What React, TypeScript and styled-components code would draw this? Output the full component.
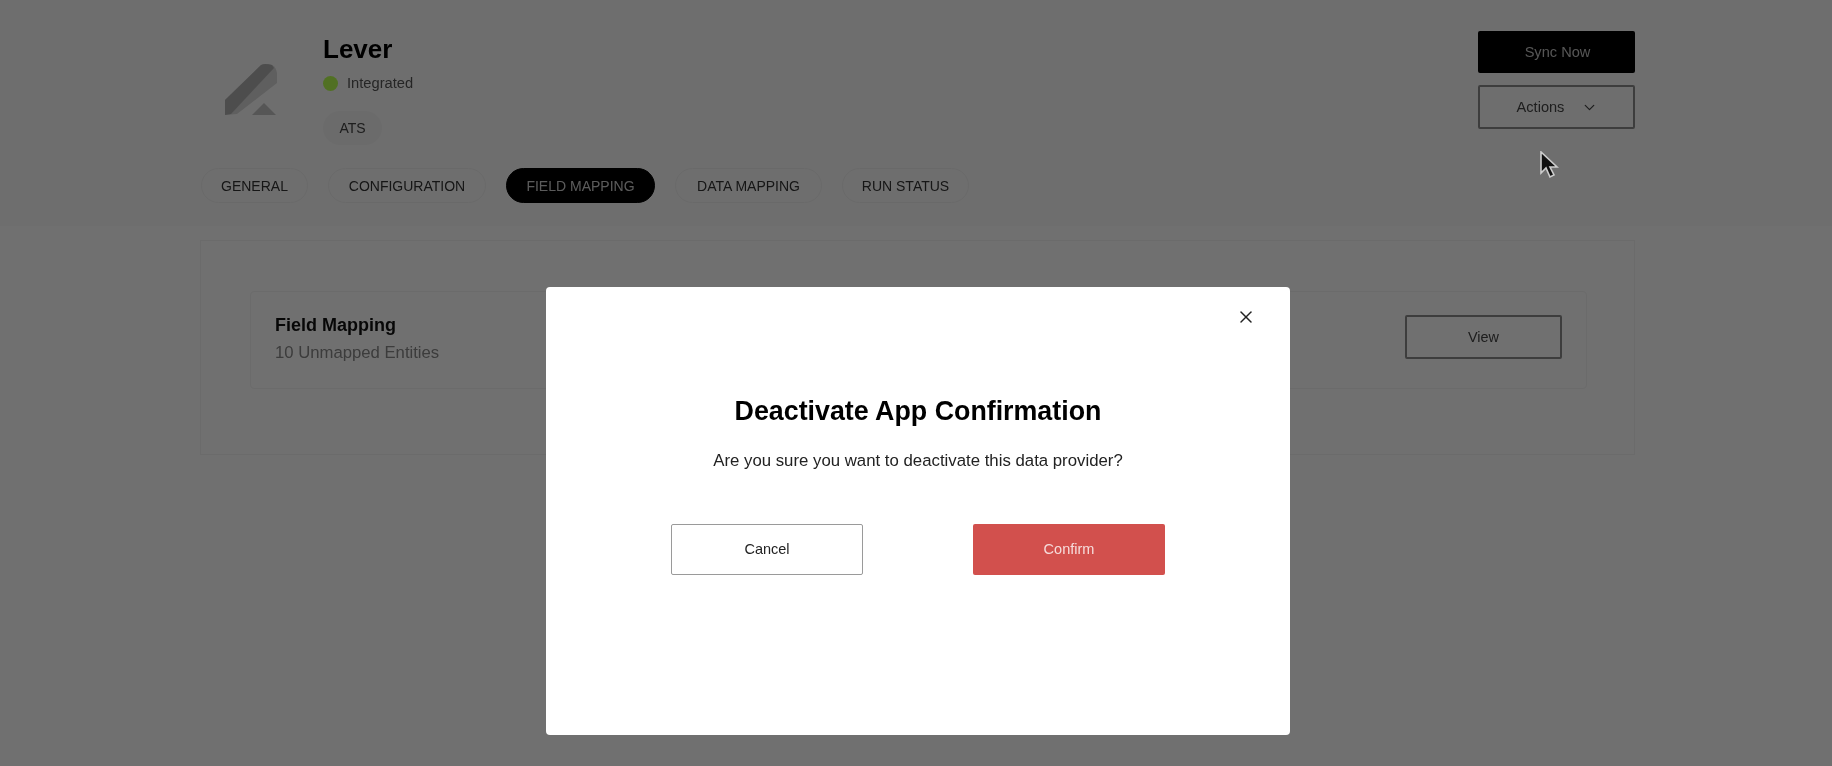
import React from 'react';
import styled, { createGlobalStyle } from 'styled-components';
import { ChevronDown, X } from 'lucide-react';

const GlobalStyle = createGlobalStyle`
  html, body {
    margin: 0;
    height: 100%;
    background: #fff;
    font-family: 'Liberation Sans', Arial, sans-serif;
    overflow: hidden;
  }
  * { box-sizing: border-box; }
`;

const Page = styled.div`
  width: 1832px;
  height: 766px;
  filter: blur(0.7px);
`;

const Header = styled.header`
  height: 226px;
  padding: 31px 197px 0 201px;
  background: #fbfbfb;
  display: flex;
  flex-direction: column;
  position: relative;
`;

const HeaderTop = styled.div`
  display: flex;
  justify-content: space-between;
  align-items: flex-start;
  height: 137px;
`;

const Identity = styled.div`
  display: flex;
  align-items: flex-start;
`;

const LogoBox = styled.div`
  width: 122px;
  padding: 31px 0 0 24px;
`;

const AppInfo = styled.div`
  display: flex;
  flex-direction: column;
  align-items: flex-start;
`;

const AppName = styled.h1`
  margin: 0;
  font-size: 26px;
  line-height: 36px;
  font-weight: 700;
  color: #000;
`;

const StatusRow = styled.div`
  display: flex;
  align-items: center;
  gap: 9px;
  margin-top: 6px;
  font-size: 14.7px;
  line-height: 20px;
  color: #555;
`;

const StatusDot = styled.span`
  width: 15px;
  height: 15px;
  border-radius: 50%;
  background: #b8ff50;
`;

const CategoryPill = styled.span`
  margin-top: 18px;
  width: 59px;
  height: 34px;
  border-radius: 17px;
  background: #f3f3f3;
  display: flex;
  align-items: center;
  justify-content: center;
  font-size: 14px;
  color: #444;
`;

const HeaderActions = styled.div`
  display: flex;
  flex-direction: column;
  gap: 12px;
  width: 157px;
`;

const ActionButton = styled.button<{ $solid?: boolean; $height: number }>`
  width: 100%;
  height: ${p => p.$height}px;
  border: ${p => (p.$solid ? 'none' : '2px solid #8c8c8c')};
  border-radius: 2px;
  background: ${p => (p.$solid ? '#000' : 'transparent')};
  color: ${p => (p.$solid ? '#c4c4c4' : '#444')};
  font-family: inherit;
  font-size: 14.6px;
  display: flex;
  align-items: center;
  justify-content: center;
  gap: 17px;
  padding: 0 0 0 2px;
`;

const Tabs = styled.nav`
  display: flex;
  gap: 20px;
`;

const Tab = styled.span<{ $active?: boolean; $width: number }>`
  width: ${p => p.$width}px;
  height: 35px;
  border-radius: 18px;
  display: flex;
  align-items: center;
  justify-content: center;
  font-size: 14px;
  border: 1px solid ${p => (p.$active ? '#000' : '#f0f0f0')};
  background: ${p => (p.$active ? '#000' : 'transparent')};
  color: ${p => (p.$active ? '#d0d0d0' : '#333')};
`;

const Content = styled.main`
  padding: 14px 197px 0 200px;
`;

const OuterCard = styled.section`
  height: 215px;
  padding: 50px 47px 0 49px;
  border: 1px solid #f3f3f3;
`;

const MappingCard = styled.div`
  height: 98px;
  padding: 0 24px 5px 24px;
  border: 1px solid #f3f3f3;
  border-radius: 4px;
  display: flex;
  align-items: center;
  justify-content: space-between;
`;

const MappingTitle = styled.div`
  font-size: 18px;
  line-height: 24px;
  font-weight: 700;
  color: #111;
`;

const MappingSub = styled.div`
  margin-top: 6px;
  font-size: 16.7px;
  line-height: 20px;
  color: #888;
`;

const ViewButton = styled.button`
  width: 157px;
  height: 44px;
  margin-bottom: 2px;
  border: 2px solid #8c8c8c;
  border-radius: 2px;
  background: transparent;
  color: #444;
  font-family: inherit;
  font-size: 14.4px;
`;

const Cursor = styled.svg`
  position: absolute;
  left: 1539px;
  top: 151px;
  filter: blur(0.5px);
`;

const Overlay = styled.div`
  position: fixed;
  inset: 0;
  background: rgba(0, 0, 0, 0.56);
  padding: 287px 542px 0 546px;
`;

const Modal = styled.div`
  position: relative;
  height: 448px;
  background: #fff;
  border-radius: 4px;
  padding-top: 106px;
  display: flex;
  flex-direction: column;
  align-items: center;
  filter: blur(0.4px);
`;

const CloseButton = styled.span`
  position: absolute;
  top: 20px;
  right: 34px;
  display: flex;
  color: #222;
`;

const ModalTitle = styled.h2`
  margin: 0;
  font-size: 26.8px;
  line-height: 36px;
  font-weight: 700;
  color: #000;
`;

const ModalText = styled.p`
  margin: 22px 0 0;
  font-size: 16.8px;
  line-height: 20px;
  color: #222;
`;

const ModalButtons = styled.div`
  margin-top: 53px;
  display: flex;
  gap: 110px;
`;

const ModalButton = styled.button<{ $danger?: boolean }>`
  width: 192px;
  height: 51px;
  padding: 0 0 2px;
  border-radius: 2px;
  border: ${p => (p.$danger ? 'none' : '1.5px solid #9a9a9a')};
  background: ${p => (p.$danger ? '#d2504d' : '#fff')};
  color: ${p => (p.$danger ? '#f6dcdb' : '#222')};
  font-family: inherit;
  font-size: 14.5px;
`;

const tabs = [
  { label: 'GENERAL', width: 107 },
  { label: 'CONFIGURATION', width: 158 },
  { label: 'FIELD MAPPING', width: 149, active: true },
  { label: 'DATA MAPPING', width: 147 },
  { label: 'RUN STATUS', width: 127 },
];

const LeverLogo = () => (
  <svg width="52" height="54" viewBox="0 0 52 54">
    <path d="M0 38 L36 3 Q40 1 47 3 Q51 5 52 11 L52 21 L12 52 L0 53 Z" fill="#d8d8d8" />
    <path d="M0 38 L36 3 Q40 1 47 3 L49 6 L6 52 L0 53 Z" fill="#b0b0b0" />
    <path d="M27 53 L39 41 L51 53 Z" fill="#c4c4c4" />
  </svg>
);

export default function App() {
  return (
    <>
      <GlobalStyle />
      <Page>
        <Header>
          <HeaderTop>
            <Identity>
              <LogoBox>
                <LeverLogo />
              </LogoBox>
              <AppInfo>
                <AppName>Lever</AppName>
                <StatusRow>
                  <StatusDot />
                  Integrated
                </StatusRow>
                <CategoryPill>ATS</CategoryPill>
              </AppInfo>
            </Identity>
            <HeaderActions>
              <ActionButton $solid $height={42}>Sync Now</ActionButton>
              <ActionButton $height={44}>
                Actions
                <ChevronDown size={17} strokeWidth={1.75} />
              </ActionButton>
            </HeaderActions>
          </HeaderTop>
          <Tabs>
            {tabs.map(tab => (
              <Tab key={tab.label} $active={tab.active} $width={tab.width}>
                {tab.label}
              </Tab>
            ))}
          </Tabs>
        </Header>
        <Content>
          <OuterCard>
            <MappingCard>
              <div>
                <MappingTitle>Field Mapping</MappingTitle>
                <MappingSub>10 Unmapped Entities</MappingSub>
              </div>
              <ViewButton>View</ViewButton>
            </MappingCard>
          </OuterCard>
        </Content>
      </Page>
      <Overlay>
        <Modal>
          <CloseButton>
            <X size={20} strokeWidth={1.8} />
          </CloseButton>
          <ModalTitle>Deactivate App Confirmation</ModalTitle>
          <ModalText>Are you sure you want to deactivate this data provider?</ModalText>
          <ModalButtons>
            <ModalButton>Cancel</ModalButton>
            <ModalButton $danger>Confirm</ModalButton>
          </ModalButtons>
        </Modal>
      </Overlay>
      <Cursor width="20" height="28" viewBox="0 0 20 28">
        <path d="M2 1 L2 22 L7 17 L11 26 L15 24 L11 16 L18 16 Z" fill="#111" stroke="#ccc" strokeWidth="1.6" />
      </Cursor>
    </>
  );
}
